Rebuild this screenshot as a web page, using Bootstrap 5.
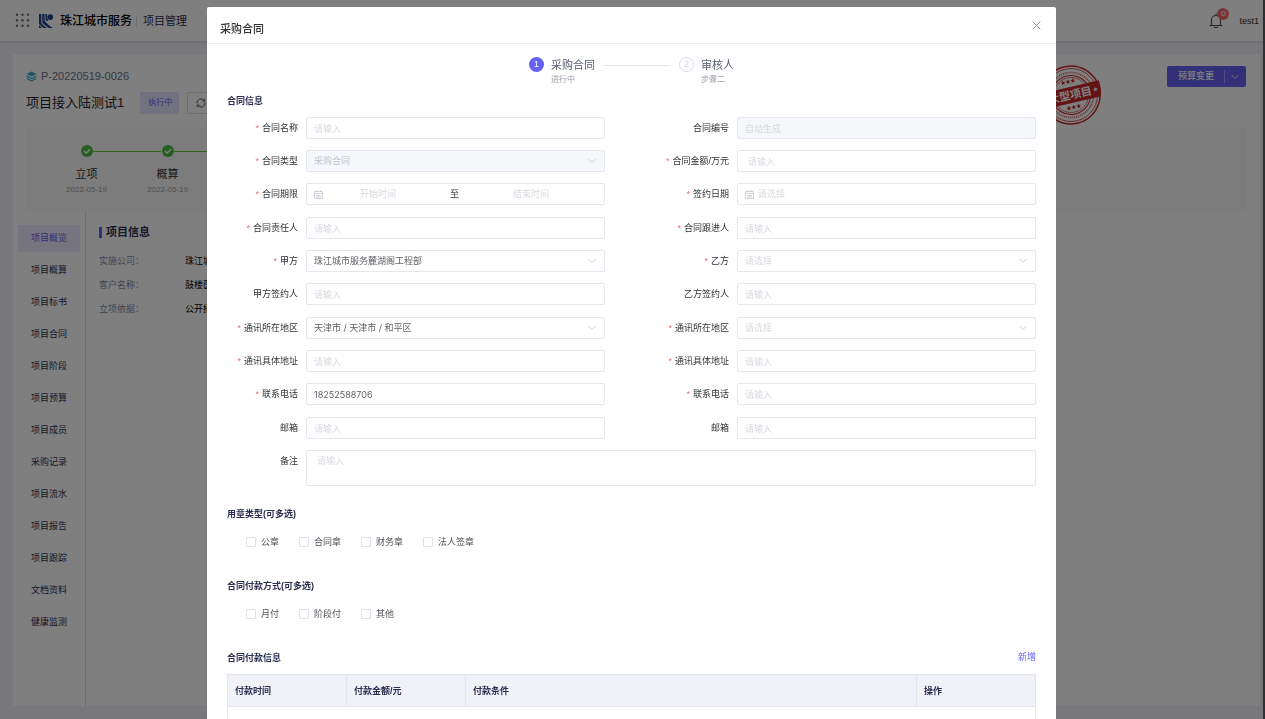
<!DOCTYPE html>
<html lang="zh-CN">
<head>
<meta charset="utf-8">
<meta name="viewport" content="width=device-width, initial-scale=1">
<title>项目管理 - 采购合同</title>
<link rel="stylesheet" href="https://cdn.jsdelivr.net/npm/bootstrap@5.3.0/dist/css/bootstrap.min.css">
<style>
  :root { --brand: #6561f0; --ink: #2b3052; --line: #e4e7ed; --hint: #d8dadf; }
  body { font: 9px/14px "Liberation Sans", "Noto Sans CJK SC", sans-serif; background: #f0f0f5; color: #303133; overflow: hidden; }
  a { text-decoration: none; color: inherit; }
  .shell { min-height: 100vh; border-right: 2px solid #606060; }
  .topbar { height: 41px; padding: 0 4px 0 15px; background: #fff; box-shadow: 0 1px 3px rgba(0,0,0,.14); }
  .brand-name { font-size: 12px; font-weight: 500; color: #000; margin-left: 6px; }
  .app-name { font-size: 11px; color: var(--ink); border-left: 1px solid #dcdfe6; padding-left: 6px; line-height: 12px; }
  .alert-bell { position: relative; line-height: 0; }
  .alert-bell .count { position: absolute; left: 8px; top: -5px; width: 12px; height: 12px; border-radius: 6px; background: #f56c6c; color: #fff; font-size: 8px; line-height: 12px; text-align: center; }
  .panel { position: relative; margin: 13px 3px 0 13px; background: #fff; height: calc(100vh - 67px); }
  .panel-head { padding: 12px 14px 14px 13px; }
  .code { font-size: 11px; line-height: 20px; color: #6b7085; margin-bottom: 6px; }
  .proj-name { font-size: 13px; line-height: 22px; margin: 0; font-weight: 400; color: #1f2130; }
  .state { font-size: 8px; background: #e4e2ff; color: var(--brand); padding: 4px 8px; width: 39px; line-height: 14px; border-radius: 2px; white-space: nowrap; }
  .btn-reload { width: 60px; height: 22px; border: 1px solid #dcdfe6; border-radius: 2px; background: #fff; padding: 0 8px; text-align: left; line-height: 0; }
  .btn-budget { height: 21px; background: var(--brand); border: 0; border-radius: 2px; color: #fff; font-size: 9px; font-weight: 500; line-height: 21px; padding: 0 11px; }
  .btn-budget.more { padding: 4px 7px 4px 0; }
  .btn-budget.more span { display: flex; align-items: center; height: 13px; border-left: 1px solid #9c99f8; padding-left: 6px; }
  .stamp { position: absolute; right: 159px; top: 11px; width: 60px; height: 60px; }
  .timeline { margin: 0 13px 0 13px; padding: 17px 20px 0 20px; height: 83px; background: #f8f8f8; }
  .phase { width: 81px; text-align: center; position: relative; }
  .phase svg { display: block; margin: 0 auto 8px; }
  .phase::after { content: ""; position: absolute; left: 47px; width: 68px; top: 6px; border-top: 1px solid #67c23a; }
  .phase b { display: block; font-size: 11px; font-weight: 400; line-height: 18px; }
  .phase small { display: block; font-size: 8px; line-height: 14px; color: #a3a3a3; }
  .side { width: 73px; padding: 14px 5px 0 5px; border-right: 1px solid #dddfe4; }
  .side a { display: block; height: 27px; line-height: 27px; margin-bottom: 5px; text-align: center; color: var(--ink); }
  .side a.active { background: #eceaff; color: var(--brand); }
  .facts { padding: 11px 13px; }
  .facts h2 { font-size: 11px; line-height: 20px; font-weight: 700; color: var(--ink); margin: 0 0 7px; display: flex; align-items: center; gap: 4px; }
  .facts h2::before { content: ""; width: 3px; height: 11px; background: var(--brand); }
  .facts dl { display: grid; grid-template-columns: 86px 1fr; line-height: 24px; margin: 0; }
  .facts dt { font-weight: 400; color: #85889a; } .facts dd { margin: 0; color: #000; }

  .modal { scrollbar-width: none; }
  .modal::-webkit-scrollbar { display: none; }
  .modal-dialog { max-width: none; margin: 7px 209px 40px 207px; }
  .modal-content { border: 0; border-radius: 2px; }
  .modal-header { height: 37px; padding: 7px 15px 0 13px; border-bottom: 1px solid #ececee; }
  .modal-title { font-size: 11px; line-height: 16px; font-weight: 500; }
  .btn-x { border: 0; background: none; padding: 0; line-height: 0; margin-top: -6px; }
  .modal-body { padding: 13px 20px; }
  .steps { height: 36px; }
  .step-no { width: 15px; height: 15px; border-radius: 50%; font-size: 9px; line-height: 15px; text-align: center; background: var(--brand); color: #fff; }
  .step-no.todo { background: none; border: 1px solid #d9d7f2; color: #d2d0ee; line-height: 13px; }
  .step-text { font-size: 11px; line-height: 17px; color: #5a6072; padding-left: 7px; }
  .step-text small { display: block; font-size: 8px; line-height: 11px; color: #9a9da8; }
  .step-line { width: 67px; margin: 8px 9px 0 8px; border-top: 1px solid #e4e5ec; }
  .sec { font-size: 9px; line-height: 16px; font-weight: 700; color: var(--ink); margin: 0; }
  .pair { display: grid; grid-template-columns: repeat(2, minmax(0, 1fr)); column-gap: 53px; margin-bottom: 11px; }
  .pair:nth-child(3n) { margin-bottom: 12px; }
  .field { display: grid; grid-template-columns: 71px minmax(0, 1fr); column-gap: 8px; }
  .field > label { text-align: right; line-height: 22px; white-space: nowrap; }
  .req::before { content: "*"; color: #f56c6c; margin-right: 3px; }
  .form-control, .form-select { height: 22px; min-height: 22px; font: 9px/14px "Inter", "Noto Sans CJK SC", sans-serif; color: #606266; border: 1px solid var(--line); border-radius: 2px; padding: 0 7px; }
  .form-control.inset { padding-left: 10px; }
  .form-control::placeholder, .range input::placeholder, .dated input::placeholder { color: var(--hint); opacity: 1; }
  .form-control:disabled, .form-select:disabled { background-color: #f5f7fb; color: #bfc3cb; }
  .form-select { background-size: 8px 8px; background-position: right 8px center; background-image: url("data:image/svg+xml,%3Csvg xmlns='http://www.w3.org/2000/svg' viewBox='0 0 8 8'%3E%3Cpath fill='none' stroke='%23c4c7ce' stroke-width='.8' d='M.5 2 4 5.500 7.500 2'/%3E%3C/svg%3E"); }
  .form-select.empty { color: var(--hint); }
  .range, .dated { display: flex; align-items: center; }
  .range { padding-right: 18px; }
  .range span { margin: 0 17px; color: #303133; }
  .range svg, .dated svg { flex: none; color: #cfd2d8; }
  .range input, .dated input { border: 0; padding: 0; min-width: 0; flex: 1; background: none; outline: 0; color: #606266; }
  .range input { text-align: center; }
  .dated { gap: 4px; }
  textarea.form-control { height: 36px; min-height: 36px; padding: 3px 10px; resize: none; }
  .ticks { display: flex; gap: 20px; padding-left: 19px; line-height: 16px; color: #505256; }
  .ticks label { display: flex; align-items: center; gap: 5px; }
  .ticks input { appearance: none; width: 10px; height: 10px; margin: 0; border: 1px solid #dfe1e8; border-radius: 1px; background: #fff; }
  .ticks input:checked { background: var(--brand); }
  .pay { table-layout: fixed; width: 100%; margin: 0; font-size: 9px; border: 1px solid #e6e8f0; }
  .pay th { height: 32px; padding: 0 7px; background: #f0f2f8; color: var(--ink); font-weight: 700; vertical-align: middle; border: 1px solid #e3e5ec; }
  .pay td { height: 40px; text-align: center; color: #909399; vertical-align: middle; }
  .pay .c-narrow { width: 119px; }
  .add { color: var(--brand); }
</style>
</head>
<body>
<div class="shell">
  <header class="topbar d-flex align-items-center">
    <svg width="15" height="15" viewBox="0 0 15 15" fill="#707070"><g id="r"><circle cx="2" cy="1.8" r="1.2"/><circle cx="7.5" cy="1.8" r="1.2"/><circle cx="13" cy="1.8" r="1.2"/></g><use href="#r" y="5.5"/><use href="#r" y="11"/></svg>
    <svg class="ms-2" width="16" height="16" viewBox="0 0 16 16" fill="#23458f"><path d="M1 1h2.300v8c0 1.500 1 2.300 2.500 3.500L9 15H5.500L1 11.200z"/><path d="M4.300 1h2.300v6.500C8 10 11 12.500 15 15h-4.500L5.300 10.800c-.7-.6-1-1.200-1-2zM1 12.300 4 15H1z"/><path d="M7.500 1h1.600v3.500a3.200 3.200 0 0 0 1.400 2.700L9 8.300c-1-.6-1.500-1.400-1.500-2.800z"/><circle cx="12.300" cy="4.100" r="2.900"/></svg>
    <span class="brand-name">珠江城市服务</span>
    <span class="app-name ms-1">项目管理</span>
    <a class="alert-bell ms-auto" href="#" aria-label="通知"><svg width="14" height="16" viewBox="0 0 14 16" fill="none" stroke="#555" stroke-width="1.200"><path d="M7 .5v2M2.500 12.500V7a4.500 4.500 0 0 1 9 0v5.500M.5 12.500h13M5 13.500c.3 1.600 3.700 1.600 4 0"/></svg><span class="count">0</span></a>
    <a class="ms-3" href="#">test1</a>
  </header>

  <main class="panel d-flex flex-column">
    <div class="panel-head d-flex justify-content-between">
      <div>
        <div class="code d-flex align-items-center gap-1"><svg width="11" height="11" viewBox="0 0 11 11"><path fill="#38a9d8" d="M5.500.5 10.500 3 5.500 5.500.5 3z"/><path fill="none" stroke="#38a9d8" stroke-width="1.300" d="M.6 5.200 5.500 7.500l4.900-2.300M.6 7.500l4.900 2.300 4.900-2.300"/></svg>P-20220519-0026</div>
        <div class="d-flex align-items-center">
          <h1 class="proj-name">项目接入陆测试1</h1>
          <span class="state ms-3">执行中</span>
          <button class="btn-reload ms-2" type="button" aria-label="刷新"><svg width="10" height="10" viewBox="0 0 10 10" fill="none" stroke="#606266"><path d="M1 5.500A4 4 0 0 1 8.500 3M9 4.500A4 4 0 0 1 1.500 7M8.700.8V3H6.500M1.300 9.200V7h2.200"/></svg></button>
        </div>
      </div>
      <div class="btn-group align-self-start">
        <button class="btn btn-budget" type="button">预算变更</button>
        <button class="btn btn-budget more" type="button" aria-label="更多"><span><svg width="8" height="8" viewBox="0 0 8 8" fill="none" stroke="#fff" stroke-width=".8"><path d="M.5 2 4 5.500 7.500 2"/></svg></span></button>
      </div>
    </div>
    <svg class="stamp" viewBox="0 0 60 60" aria-label="大型项目">
      <g transform="rotate(-13 30 30)" fill="none" stroke="#c8282a">
        <circle cx="30" cy="30" r="29" stroke-width="1.500"/><circle cx="30" cy="30" r="26.500" stroke-width=".7"/><circle cx="30" cy="30" r="22.500" stroke-width="1.800" stroke-dasharray="1 1" opacity=".75"/><circle cx="30" cy="30" r="19.500" stroke-width="1"/><circle cx="30" cy="30" r="17.500" stroke-width=".6"/>
        <path fill="#c8282a" stroke="none" d="M-.5 22h61v16h-61z"/>
        <text x="29" y="34" fill="#fff" stroke="none" font-size="11" font-weight="700" text-anchor="middle" font-family="Noto Sans CJK SC, sans-serif">大型项目</text>
        <g fill="#c8282a" stroke="none"><path id="st" d="m30 14 .7 1.600 1.700.1-1.300 1.100.4 1.700-1.500-.9-1.500.9.4-1.700-1.300-1.100 1.700-.1z"/><use href="#st" x="-5"/><use href="#st" x="5"/><use href="#st" y="26"/><use href="#st" x="-5" y="26"/><use href="#st" x="5" y="26"/></g>
        <path fill="#fff" stroke="none" d="m55 27.500.7 1.600 1.700.1-1.300 1.100.4 1.700-1.500-.9-1.500.9.4-1.700-1.300-1.100 1.700-.1z"/>
      </g>
    </svg>
    <div class="timeline d-flex">
      <div class="phase"><svg width="12" height="12" viewBox="0 0 12 12"><circle cx="6" cy="6" r="6" fill="#4fbf46"/><path fill="none" stroke="#fff" stroke-width="1.300" d="m3 6 2.200 2L9 4.300"/></svg><b>立项</b><small>2022-05-19</small></div>
      <div class="phase"><svg width="12" height="12" viewBox="0 0 12 12"><circle cx="6" cy="6" r="6" fill="#4fbf46"/><path fill="none" stroke="#fff" stroke-width="1.300" d="m3 6 2.200 2L9 4.300"/></svg><b>概算</b><small>2022-05-19</small></div>
    </div>
    <div class="d-flex flex-grow-1">
      <nav class="side">
        <a class="active" href="#">项目概览</a><a href="#">项目概算</a><a href="#">项目标书</a><a href="#">项目合同</a><a href="#">项目阶段</a><a href="#">项目预算</a><a href="#">项目成员</a><a href="#">采购记录</a><a href="#">项目流水</a><a href="#">项目报告</a><a href="#">项目跟踪</a><a href="#">文档资料</a><a href="#">健康监测</a>
      </nav>
      <section class="facts flex-grow-1">
        <h2>项目信息</h2>
        <dl><dt>实施公司：</dt><dd>珠江城市服务</dd><dt>客户名称：</dt><dd>鼓楼医院</dd><dt>立项依据：</dt><dd>公开招标</dd></dl>
      </section>
    </div>
  </main>
</div>

<div class="modal-backdrop show"></div>
<div class="modal d-block" tabindex="-1" role="dialog" aria-labelledby="dlgTitle">
  <div class="modal-dialog">
    <form class="modal-content">
      <div class="modal-header">
        <h5 class="modal-title" id="dlgTitle">采购合同</h5>
        <button class="btn-x" type="button" aria-label="关闭"><svg width="9" height="9" viewBox="0 0 9 9" stroke="#909399"><path d="m.7.7 7.600 7.600M8.300.7.7 8.300"/></svg></button>
      </div>
      <div class="modal-body">
        <div class="steps d-flex justify-content-center">
          <span class="step-no">1</span><div class="step-text">采购合同<small>进行中</small></div>
          <div class="step-line"></div>
          <span class="step-no todo">2</span><div class="step-text">审核人<small>步骤二</small></div>
        </div>
        <h6 class="sec mb-2">合同信息</h6>
        <div>
          <div class="pair">
            <div class="field"><label class="req" for="a1">合同名称</label><input class="form-control" id="a1" placeholder="请输入"></div>
            <div class="field"><label for="b1">合同编号</label><input class="form-control" id="b1" placeholder="自动生成" disabled></div>
          </div>
          <div class="pair">
            <div class="field"><label class="req" for="a2">合同类型</label><select class="form-select" id="a2" disabled><option>采购合同</option></select></div>
            <div class="field"><label class="req" for="b2">合同金额/万元</label><input class="form-control inset" id="b2" placeholder="请输入"></div>
          </div>
          <div class="pair">
            <div class="field"><label class="req" for="a3">合同期限</label><div class="form-control range"><svg width="9" height="9" viewBox="0 0 9 9" fill="none" stroke="currentColor"><path d="M.5 1.500h8v7h-8zM.5 3.500h8M2.500 0v2M6.500 0v2M2 5.500h5M2 7h5"/></svg><input id="a3" placeholder="开始时间"><span>至</span><input placeholder="结束时间" aria-label="结束时间"></div></div>
            <div class="field"><label class="req" for="b3">签约日期</label><div class="form-control dated"><svg width="9" height="9" viewBox="0 0 9 9" fill="none" stroke="currentColor"><path d="M.5 1.500h8v7h-8zM.5 3.500h8M2.500 0v2M6.500 0v2M2 5.500h5M2 7h5"/></svg><input id="b3" placeholder="请选择"></div></div>
          </div>
          <div class="pair">
            <div class="field"><label class="req" for="a4">合同责任人</label><input class="form-control" id="a4" placeholder="请输入"></div>
            <div class="field"><label class="req" for="b4">合同跟进人</label><input class="form-control" id="b4" placeholder="请输入"></div>
          </div>
          <div class="pair">
            <div class="field"><label class="req" for="a5">甲方</label><select class="form-select" id="a5"><option>珠江城市服务麓湖阁工程部</option></select></div>
            <div class="field"><label class="req" for="b5">乙方</label><select class="form-select empty" id="b5"><option>请选择</option></select></div>
          </div>
          <div class="pair">
            <div class="field"><label for="a6">甲方签约人</label><input class="form-control" id="a6" placeholder="请输入"></div>
            <div class="field"><label for="b6">乙方签约人</label><input class="form-control" id="b6" placeholder="请输入"></div>
          </div>
          <div class="pair">
            <div class="field"><label class="req" for="a7">通讯所在地区</label><select class="form-select" id="a7"><option>天津市 / 天津市 / 和平区</option></select></div>
            <div class="field"><label class="req" for="b7">通讯所在地区</label><select class="form-select empty" id="b7"><option>请选择</option></select></div>
          </div>
          <div class="pair">
            <div class="field"><label class="req" for="a8">通讯具体地址</label><input class="form-control" id="a8" placeholder="请输入"></div>
            <div class="field"><label class="req" for="b8">通讯具体地址</label><input class="form-control" id="b8" placeholder="请输入"></div>
          </div>
          <div class="pair">
            <div class="field"><label class="req" for="a9">联系电话</label><input class="form-control" id="a9" type="tel" value="18252588706"></div>
            <div class="field"><label class="req" for="b9">联系电话</label><input class="form-control" id="b9" type="tel" placeholder="请输入"></div>
          </div>
          <div class="pair">
            <div class="field"><label for="a10">邮箱</label><input class="form-control" id="a10" placeholder="请输入"></div>
            <div class="field"><label for="b10">邮箱</label><input class="form-control" id="b10" placeholder="请输入"></div>
          </div>
          <div class="field"><label for="memo">备注</label><textarea class="form-control" id="memo" placeholder="请输入"></textarea></div>
        </div>

        <h6 class="sec mt-3 pt-1">用章类型(可多选)</h6>
        <div class="ticks mt-2 pt-1">
          <label><input type="checkbox">公章</label><label><input type="checkbox">合同章</label><label><input type="checkbox">财务章</label><label><input type="checkbox">法人签章</label>
        </div>
        <h6 class="sec mt-4 pt-1">合同付款方式(可多选)</h6>
        <div class="ticks mt-2 pt-1">
          <label><input type="checkbox">月付</label><label><input type="checkbox">阶段付</label><label><input type="checkbox">其他</label>
        </div>
        <div class="d-flex justify-content-between mt-4 pt-1 mb-2">
          <h6 class="sec">合同付款信息</h6><a class="add" href="#">新增</a>
        </div>
        <table class="pay">
          <thead><tr><th class="c-narrow">付款时间</th><th class="c-narrow">付款金额/元</th><th>付款条件</th><th class="c-narrow">操作</th></tr></thead>
          <tbody><tr><td colspan="4"></td></tr></tbody>
        </table>
      </div>
    </form>
  </div>
</div>
<script src="https://cdn.jsdelivr.net/npm/bootstrap@5.3.0/dist/js/bootstrap.bundle.min.js"></script>
</body>
</html>
